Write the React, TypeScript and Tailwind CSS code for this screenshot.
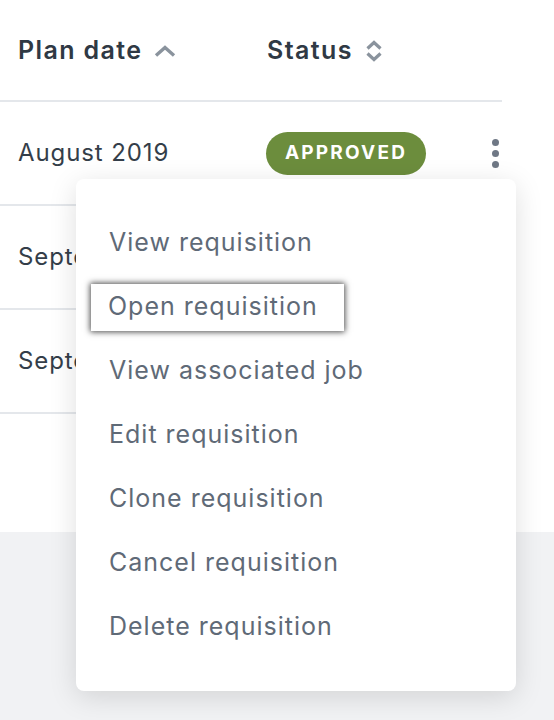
const rows = [
  { date: "August 2019", status: "APPROVED" },
  { date: "September 2019", status: "APPROVED" },
  { date: "September 2019", status: "APPROVED" },
];

const menuItems = [
  "View requisition",
  "Open requisition",
  "View associated job",
  "Edit requisition",
  "Clone requisition",
  "Cancel requisition",
  "Delete requisition",
];

const UpIcon = () => (
  <svg width="22" height="12" viewBox="0 0 22 12" className="ml-[11px]">
    <path d="M2 10.5 L11 2.5 L20 10.5" fill="none" stroke="#8a939d" strokeWidth="3.4" />
  </svg>
);

const SortIcon = () => (
  <svg width="18" height="22" viewBox="0 0 18 22" className="ml-[12px]">
    <path d="M2.5 8.5 L9 2.5 L15.5 8.5" fill="none" stroke="#8a939d" strokeWidth="3.2" />
    <path d="M2.5 13.5 L9 19.5 L15.5 13.5" fill="none" stroke="#8a939d" strokeWidth="3.2" />
  </svg>
);

const Kebab = () => (
  <div className="flex flex-col items-center gap-[4px]">
    <span className="w-[7px] h-[7px] rounded-full bg-[#6f7885]" />
    <span className="w-[7px] h-[7px] rounded-full bg-[#6f7885]" />
    <span className="w-[7px] h-[7px] rounded-full bg-[#6f7885]" />
  </div>
);

const App = () => {
  return (
    <div
      className="relative min-h-[720px] bg-[#f1f2f4]"
      style={{ fontFamily: "Inter, 'Noto Sans', sans-serif" }}
    >
      <div className="bg-white h-[532px] pr-[52px]">
        <div className="flex items-center h-[102px] pt-[2px] border-b-2 border-[#e4e7eb] text-[25px] font-semibold tracking-[1.4px] text-[#2f3944]">
          <div className="w-[267px] pl-[18px] flex items-center">
            Plan date
            <UpIcon />
          </div>
          <div className="flex items-center">
            Status
            <SortIcon />
          </div>
        </div>
        {rows.map((row, i) => (
          <div
            key={i}
            className="flex items-center h-[104px] border-b-2 border-[#e4e7eb] text-[24px] tracking-[0.9px] text-[#343e49]"
          >
            <div className="w-[266px] pl-[18px] whitespace-nowrap">{row.date}</div>
            <div className="w-[160px] h-[43px] rounded-full bg-[#6c8d3d] flex items-center justify-center text-white text-[19px] font-bold tracking-[2.2px]">
              {row.status}
            </div>
            <div className="ml-[66px]">
              <Kebab />
            </div>
          </div>
        ))}
      </div>

      <div className="absolute left-[76px] top-[179px] w-[440px] bg-white rounded-[8px] py-[32px] shadow-[0_6px_28px_rgba(0,0,0,0.13)]">
        {menuItems.map((item, i) => (
          <div key={i} className="h-[64px] flex items-center text-[25px] tracking-[1px] text-[#5f6a77]">
            {i === 1 ? (
              <div className="ml-[15px] w-[253px] h-[47px] pl-[17px] flex items-center bg-white shadow-[0_0_6px_1px_rgba(0,0,0,0.7)]">
                {item}
              </div>
            ) : (
              <div className="pl-[33px]">{item}</div>
            )}
          </div>
        ))}
      </div>
    </div>
  );
};

export default App;
